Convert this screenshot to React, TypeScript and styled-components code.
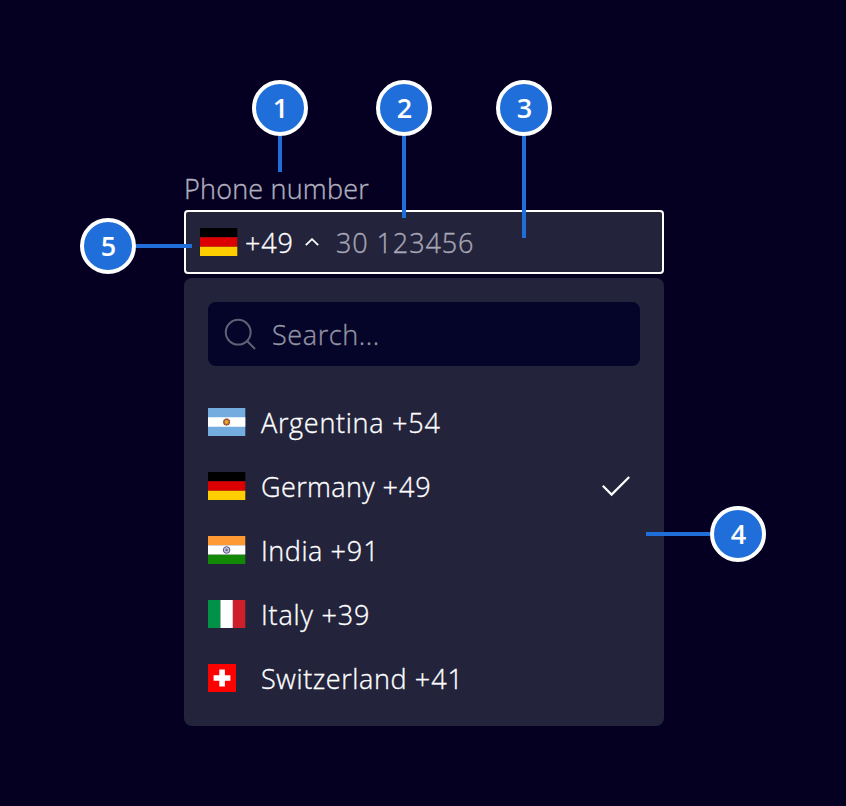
import React from "react";
import styled, { createGlobalStyle } from "styled-components";

const GlobalStyle = createGlobalStyle`
  *, *::before, *::after { box-sizing: border-box; }
  html, body { margin: 0; background: #050021; }
  body {
    font-family: "Open Sans", "Noto Sans", sans-serif;
    font-weight: 300;
    -webkit-text-stroke: 0.35px currentColor;
  }
`;

const Page = styled.main`
  position: relative;
  width: 846px;
  height: 806px;
  padding: 172px 182px 0 184px;
  overflow: hidden;
  background: #050021;
`;

const Label = styled.label`
  display: block;
  height: 38px;
  line-height: 33px;
  font-size: 27px;
  letter-spacing: 0.2px;
  color: #b2b0bf;
`;

const Field = styled.div`
  display: flex;
  align-items: center;
  height: 64px;
  padding-left: 14px;
  border: 2px solid #fff;
  border-radius: 4px;
  background: #23233c;
  font-size: 27px;
  line-height: 36px;
`;

const Prefix = styled.span`
  width: 60px;
  margin-left: 7px;
  padding-top: 1px;
  color: #fff;
  letter-spacing: 0.9px;
  white-space: nowrap;
`;

const Placeholder = styled.span`
  margin-left: 17px;
  padding-top: 1px;
  color: #a8a7b5;
  letter-spacing: 0.9px;
  white-space: nowrap;
`;

const Menu = styled.div`
  height: 448px;
  margin-top: 4px;
  padding: 24px;
  border-radius: 8px;
  background: #23233c;
`;

const Search = styled.div`
  display: flex;
  align-items: center;
  gap: 16px;
  height: 64px;
  margin-bottom: 24px;
  padding-left: 16px;
  border-radius: 8px;
  background: #050529;
  color: #9594a3;
  font-size: 27px;
`;

const Option = styled.div`
  display: flex;
  align-items: center;
  height: 64px;
  padding-right: 8px;
  color: #fff;
  font-size: 27px;
`;

const FlagSlot = styled.span`
  display: flex;
  width: 53px;
`;

const Text = styled.span<{ $spacing: number }>`
  flex: 1;
  padding-top: 1px;
  line-height: 36px;
  letter-spacing: ${(p) => p.$spacing}px;
  white-space: pre;
`;

const DialCode = styled.span`
  letter-spacing: 0.9px;
`;

type Side = "top" | "left" | "right";

const Marker = styled.div<{ $x: number; $y: number; $side: Side }>`
  position: absolute;
  left: ${(p) => p.$x}px;
  top: ${(p) => p.$y}px;
  display: flex;
  align-items: center;
  flex-direction: ${(p) => (p.$side === "top" ? "column" : p.$side === "left" ? "row" : "row-reverse")};
`;

const Badge = styled.span`
  display: flex;
  align-items: center;
  justify-content: center;
  width: 56px;
  height: 56px;
  padding-left: 1px;
  border: 4px solid #fff;
  border-radius: 50%;
  background: #206ed9;
  color: #fff;
  font-size: 27px;
  font-weight: 600;
  line-height: 48px;
  -webkit-text-stroke: 0;
`;

const Lead = styled.span<{ $side: Side; $length: number }>`
  width: ${(p) => (p.$side === "top" ? 4 : p.$length)}px;
  height: ${(p) => (p.$side === "top" ? p.$length : 4)}px;
  background: #206ed9;
`;

type Country = "ar" | "de" | "in" | "it" | "ch";

const Flag = ({ country }: { country: Country }) => {
  if (country === "ch")
    return (
      <svg width="28" height="28" viewBox="0 0 28 28">
        <path fill="#f00" d="M0 0h28v28H0z" />
        <path fill="#fff" d="M11.3 5.6h5.6v5.6h5.5v5.6h-5.5v5.6h-5.6v-5.6H5.6v-5.6h5.7z" />
      </svg>
    );
  return (
    <svg width="38" height="28" viewBox="0 0 38 28">
      {country === "ar" && (
        <>
          <path fill="#74acdf" d="M0 0h37.3v28H0z" />
          <path fill="#fff" d="M0 9.33h37.3v9.33H0z" />
          <circle cx="18.6" cy="14" r="3.6" fill="#c08a60" />
          <circle cx="18.6" cy="14" r="2.7" fill="none" stroke="#8f4a34" strokeWidth="1.4" strokeDasharray="1.3 .5" />
          <circle cx="18.6" cy="14" r="1.8" fill="#f2a616" />
        </>
      )}
      {country === "de" && (
        <>
          <path d="M0 0h37.3v9.33H0z" />
          <path fill="#d00" d="M0 9.33h37.3v9.34H0z" />
          <path fill="#ffce00" d="M0 18.67h37.3V28H0z" />
        </>
      )}
      {country === "in" && (
        <>
          <path fill="#f93" d="M0 0h37.3v9.33H0z" />
          <path fill="#fff" d="M0 9.33h37.3v9.34H0z" />
          <path fill="#128807" d="M0 18.67h37.3V28H0z" />
          <circle cx="18.6" cy="14" r="3.3" fill="#c4c4d8" stroke="#55558b" strokeWidth="1" />
          <circle cx="18.6" cy="14" r="1.3" fill="#6b6b9c" />
        </>
      )}
      {country === "it" && (
        <>
          <path fill="#009246" d="M0 0h12.43v28H0z" />
          <path fill="#fff" d="M12.43 0h12.44v28H12.43z" />
          <path fill="#ce202a" d="M24.87 0H37.3v28H24.87z" />
        </>
      )}
    </svg>
  );
};

const Chevron = () => (
  <svg width="14" height="8" viewBox="0 0 14 8" fill="none" stroke="#fff" strokeWidth="1.8">
    <path d="M.8 7.2 7 1.2l6.2 6" />
  </svg>
);

const SearchIcon = () => (
  <svg width="32" height="32" viewBox="0 0 32 32" fill="none" stroke="#616077" strokeWidth="2">
    <circle cx="14.2" cy="14.2" r="12.4" />
    <path d="m22.8 22.8 8.2 8.2" />
  </svg>
);

const Check = () => (
  <svg width="32" height="32" viewBox="0 0 32 32" fill="none" stroke="#fff" strokeWidth="2.2">
    <path d="m2.8 15.8 8.8 8.8L29.2 7" />
  </svg>
);

const countries: { code: Country; name: string; dial: string; spacing: number; selected?: boolean }[] = [
  { code: "ar", name: "Argentina", dial: "+54", spacing: 0.7 },
  { code: "de", name: "Germany", dial: "+49", spacing: 0.4, selected: true },
  { code: "in", name: "India", dial: "+91", spacing: 0.55 },
  { code: "it", name: "Italy", dial: "+39", spacing: 0.8 },
  { code: "ch", name: "Switzerland", dial: "+41", spacing: 0.6 },
];

const markers: { n: number; x: number; y: number; side: Side; length: number }[] = [
  { n: 1, x: 252, y: 80, side: "top", length: 36 },
  { n: 2, x: 376, y: 80, side: "top", length: 82 },
  { n: 3, x: 496, y: 80, side: "top", length: 102 },
  { n: 4, x: 646, y: 506, side: "right", length: 64 },
  { n: 5, x: 80, y: 218, side: "left", length: 56 },
];

export default function App() {
  return (
    <>
      <GlobalStyle />
      <Page>
        <Label>Phone number</Label>
        <Field>
          <Flag country="de" />
          <Prefix>+49</Prefix>
          <Chevron />
          <Placeholder>30 123456</Placeholder>
        </Field>
        <Menu>
          <Search>
            <SearchIcon />
            <Text $spacing={0.6}>Search...</Text>
          </Search>
          {countries.map((c) => (
            <Option key={c.code}>
              <FlagSlot>
                <Flag country={c.code} />
              </FlagSlot>
              <Text $spacing={c.spacing}>
                {c.name} <DialCode>{c.dial}</DialCode>
              </Text>
              {c.selected && <Check />}
            </Option>
          ))}
        </Menu>
        {markers.map((m) => (
          <Marker key={m.n} $x={m.x} $y={m.y} $side={m.side}>
            <Badge>{m.n}</Badge>
            <Lead $side={m.side} $length={m.length} />
          </Marker>
        ))}
      </Page>
    </>
  );
}
